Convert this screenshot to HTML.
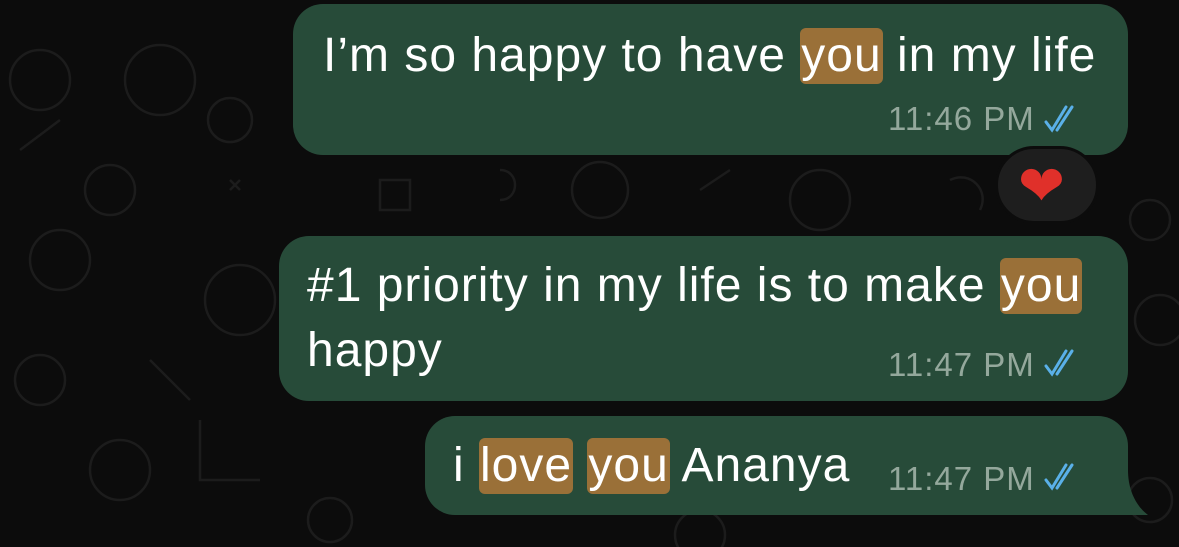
<!DOCTYPE html>
<html><head><meta charset="utf-8"><style>
*{margin:0;padding:0;box-sizing:border-box}
body{width:1179px;height:547px;background:#0c0c0c;overflow:hidden;position:relative;font-family:"Liberation Sans",sans-serif;color:#fff}
.b{position:absolute;background:#274b39;border-radius:30px}
.t{position:absolute;font-size:48px;letter-spacing:1px;white-space:nowrap;line-height:1}
.h{background:#9a7038;border-radius:6px;padding:1px 1px 2px}
.tm{position:absolute;font-size:33px;letter-spacing:1px;color:#94a89c;white-space:nowrap;line-height:1}
.ck{position:absolute}
</style></head><body>
<svg width="1179" height="547" style="position:absolute;left:0;top:0" fill="none" stroke="#1c1c1c" stroke-width="2.5">
<circle cx="40" cy="80" r="30"/><circle cx="160" cy="80" r="35"/><circle cx="110" cy="190" r="25"/><circle cx="60" cy="260" r="30"/><circle cx="230" cy="120" r="22"/><circle cx="40" cy="380" r="25"/><circle cx="120" cy="470" r="30"/><circle cx="240" cy="300" r="35"/><circle cx="600" cy="190" r="28"/><circle cx="820" cy="200" r="30"/><circle cx="1150" cy="220" r="20"/><circle cx="1160" cy="320" r="25"/><circle cx="330" cy="520" r="22"/><circle cx="700" cy="535" r="25"/><circle cx="1150" cy="500" r="22"/>
<path d="M230 180l10 10M240 180l-10 10M380 180h30v30h-30zM500 170c20 0 20 30 0 30M700 190l30-20M950 180c20-10 40 10 30 30M150 360l40 40M200 420v60h60M20 150l40-30"/>
</svg>
<div class="b" style="left:293px;top:4px;width:835px;height:151px"></div>
<div class="t" style="left:323px;top:32px">I’m so happy to have <span class="h">you</span> in my life</div>
<div class="tm" style="left:888px;top:102px">11:46 PM</div>
<svg class="ck" style="left:1044px;top:104px" width="30" height="30" viewBox="0 0 30 30" fill="none" stroke="#5ab0e8" stroke-width="3" stroke-linecap="round"><path d="M2 18l6 8L22 3M13 26L28 3"/></svg>
<div style="position:absolute;left:995px;top:146px;width:104px;height:78px;border-radius:39px;background:#1e1e1e;border:3px solid #0c0c0c"></div>
<div style="position:absolute;left:1018px;top:158px;font-size:56px;line-height:1;color:#e0302a">❤</div>
<div class="b" style="left:279px;top:236px;width:849px;height:165px"></div>
<div class="t" style="left:307px;top:262px">#1 priority in my life is to make <span class="h">you</span></div>
<div class="t" style="left:307px;top:327px">happy</div>
<div class="tm" style="left:888px;top:348px">11:47 PM</div>
<svg class="ck" style="left:1044px;top:348px" width="30" height="30" viewBox="0 0 30 30" fill="none" stroke="#5ab0e8" stroke-width="3" stroke-linecap="round"><path d="M2 18l6 8L22 3M13 26L28 3"/></svg>
<div class="b" style="left:425px;top:416px;width:703px;height:99px;border-bottom-right-radius:0"></div>
<svg style="position:absolute;left:1100px;top:470px" width="50" height="46"><path d="M0 0h28c0 20 8 36 20 45H0z" fill="#274b39"/></svg>
<div class="t" style="left:453px;top:442px">i <span class="h">love</span> <span class="h">you</span> Ananya</div>
<div class="tm" style="left:888px;top:462px">11:47 PM</div>
<svg class="ck" style="left:1044px;top:462px" width="30" height="30" viewBox="0 0 30 30" fill="none" stroke="#5ab0e8" stroke-width="3" stroke-linecap="round"><path d="M2 18l6 8L22 3M13 26L28 3"/></svg>
</body></html>
